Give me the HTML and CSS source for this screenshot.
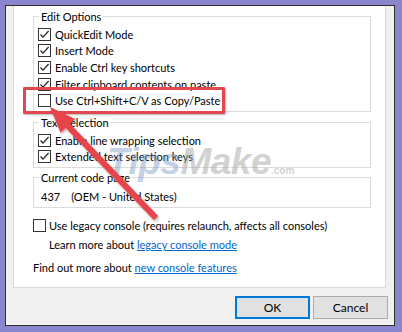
FILE: index.html
```html
<!DOCTYPE html>
<html lang="en">
<head>
    <meta charset="UTF-8">
    <meta name="viewport" content="width=device-width, initial-scale=1.0">
    <title>Console Options</title>
    <link rel="stylesheet" href="styles.css">
</head>
<body>
    <div class="screen">
        <div class="window">
            <div class="page">
                <!-- Edit Options -->
                <fieldset class="group group-edit">
                    <legend>Edit Options</legend>
                    <div class="check-row"><span class="box checked"><svg viewBox="0 0 11 11"><path d="M1.5 5.5 L4 8.2 L9.6 2"/></svg></span>QuickEdit Mode</div>
                    <div class="check-row"><span class="box checked"><svg viewBox="0 0 11 11"><path d="M1.5 5.5 L4 8.2 L9.6 2"/></svg></span>Insert Mode</div>
                    <div class="check-row"><span class="box checked"><svg viewBox="0 0 11 11"><path d="M1.5 5.5 L4 8.2 L9.6 2"/></svg></span>Enable Ctrl key shortcuts</div>
                    <div class="check-row"><span class="box checked"><svg viewBox="0 0 11 11"><path d="M1.5 5.5 L4 8.2 L9.6 2"/></svg></span>Filter clipboard contents on paste</div>
                    <div class="check-row"><span class="box"></span>Use Ctrl+Shift+C/V as Copy/Paste</div>
                </fieldset>

                <!-- Text Selection -->
                <fieldset class="group group-text">
                    <legend>Text Selection</legend>
                    <div class="check-row"><span class="box checked"><svg viewBox="0 0 11 11"><path d="M1.5 5.5 L4 8.2 L9.6 2"/></svg></span>Enable line wrapping selection</div>
                    <div class="check-row"><span class="box checked"><svg viewBox="0 0 11 11"><path d="M1.5 5.5 L4 8.2 L9.6 2"/></svg></span>Extended text selection keys</div>
                </fieldset>

                <!-- Code page -->
                <fieldset class="group group-code">
                    <legend>Current code page</legend>
                    <div class="code-value"><span class="code-num">437</span>(OEM - United States)</div>
                </fieldset>

                <div class="check-row legacy"><span class="box"></span>Use legacy console (requires relaunch, affects all consoles)</div>
                <div class="info learn">Learn more about <a href="#">legacy console mode</a></div>
                <div class="info find">Find out more about <a href="#">new console features</a></div>
            </div>

            <div class="buttons">
                <button class="btn btn-default">OK</button>
                <button class="btn">Cancel</button>
            </div>
        </div>

        <!-- Annotations on top of the screenshot -->
        <div class="highlight"></div>
        <div class="watermark"><span class="wm-tips">Tips</span>Make<span class="wm-com">.com</span></div>
        <svg class="arrow" viewBox="0 0 402 332">
            <defs>
                <filter id="shadow" x="-20%" y="-20%" width="140%" height="140%">
                    <feDropShadow dx="1" dy="1.5" stdDeviation="1.2" flood-color="#000" flood-opacity="0.35"/>
                </filter>
            </defs>
            <polygon filter="url(#shadow)" points="50,107 75.2,119 70.1,123.8 158.2,215.9 153.8,220.1 65.7,128 60.6,132.8"/>
        </svg>
    </div>
</body>
</html>
```

FILE: styles.css
```css
* {
    margin: 0;
    padding: 0;
    box-sizing: border-box;
}

body {
    background: #8986cd;
    font-family: Lato, 'Liberation Sans', sans-serif;
    font-size: 11px;
    color: #000;
}

.screen {
    position: relative;
    width: 402px;
    height: 332px;
    padding: 5px 0 0 5px;
    overflow: hidden;
}

.window {
    width: 390px;
    height: 321px;
    border: 1px solid #2e2e2e;
    background: #f0f0f0;
    box-shadow: inset 0 0 0 1px #f8f4ea;
    padding: 0 8px 0 7px;
}

/* Tab page */
.page {
    height: 282px;
    background: #fff;
    border: 1px solid #d9d9d9;
    border-top: none;
    padding: 2.5px 14px 0 19px;
}

.group {
    border: 1px solid #dcdcdc;
    padding: 0 0 2px 4px;
    min-width: 0;
}

.group legend {
    line-height: 15px;
    padding: 0 2px;
    margin-left: 1px;
}

.group-edit {
    padding-top: 2.5px;
}

.group-text {
    margin-top: 3.5px;
    padding-top: 1.25px;
}

.group-code {
    margin-top: 2.5px;
    padding-top: 2.5px;
    padding-bottom: 2.5px;
}

.check-row {
    display: flex;
    align-items: center;
    height: 16.6px;
    gap: 4px;
    white-space: nowrap;
}

.box {
    width: 13px;
    height: 13px;
    border: 1px solid #333;
    background: #fff;
    flex-shrink: 0;
    display: flex;
}

.box svg {
    width: 11px;
    height: 11px;
}

.box path {
    fill: none;
    stroke: #222;
    stroke-width: 1.2;
}

.code-value {
    line-height: 17px;
    padding-left: 3px;
}

.code-num {
    margin-right: 11px;
}

.legacy {
    margin-top: 8.5px;
    height: 17px;
    gap: 3px;
}

.info {
    line-height: 17px;
    white-space: nowrap;
}

.learn {
    margin-top: 2px;
    padding-left: 16px;
}

.find {
    margin-top: 6px;
}

.info a {
    color: #0066cc;
    text-decoration: underline;
}

/* Dialog buttons */
.buttons {
    display: flex;
    justify-content: flex-end;
    gap: 3px;
    margin-top: 8px;
    margin-right: -2px;
}

.btn {
    width: 75px;
    height: 23px;
    background: #e1e1e1;
    border: 1px solid #adadad;
    font-family: Lato, 'Liberation Sans', sans-serif;
    font-size: 12px;
    color: #000;
}

.btn-default {
    border-color: #0078d7;
    box-shadow: inset 0 0 0 1px #0078d7;
}

/* Annotations */
.highlight {
    position: absolute;
    left: 23px;
    top: 87px;
    width: 202px;
    height: 27px;
    border: 3px solid #e3484e;
    border-radius: 1px;
    box-shadow: 1px 1px 2px rgba(0, 0, 0, 0.3);
}

.watermark {
    position: absolute;
    left: 107px;
    top: 142px;
    font-family: 'Liberation Sans', sans-serif;
    font-size: 37px;
    font-weight: bold;
    font-style: italic;
    color: rgba(165, 165, 165, 0.5);
    line-height: 40px;
    letter-spacing: -0.5px;
    white-space: nowrap;
}

.wm-tips {
    color: rgba(120, 150, 195, 0.45);
}

.wm-com {
    font-size: 10px;
    font-style: normal;
    letter-spacing: 0;
}

.arrow {
    position: absolute;
    left: 0;
    top: 0;
    width: 402px;
    height: 332px;
}

.arrow polygon {
    fill: #e8444b;
}
```
